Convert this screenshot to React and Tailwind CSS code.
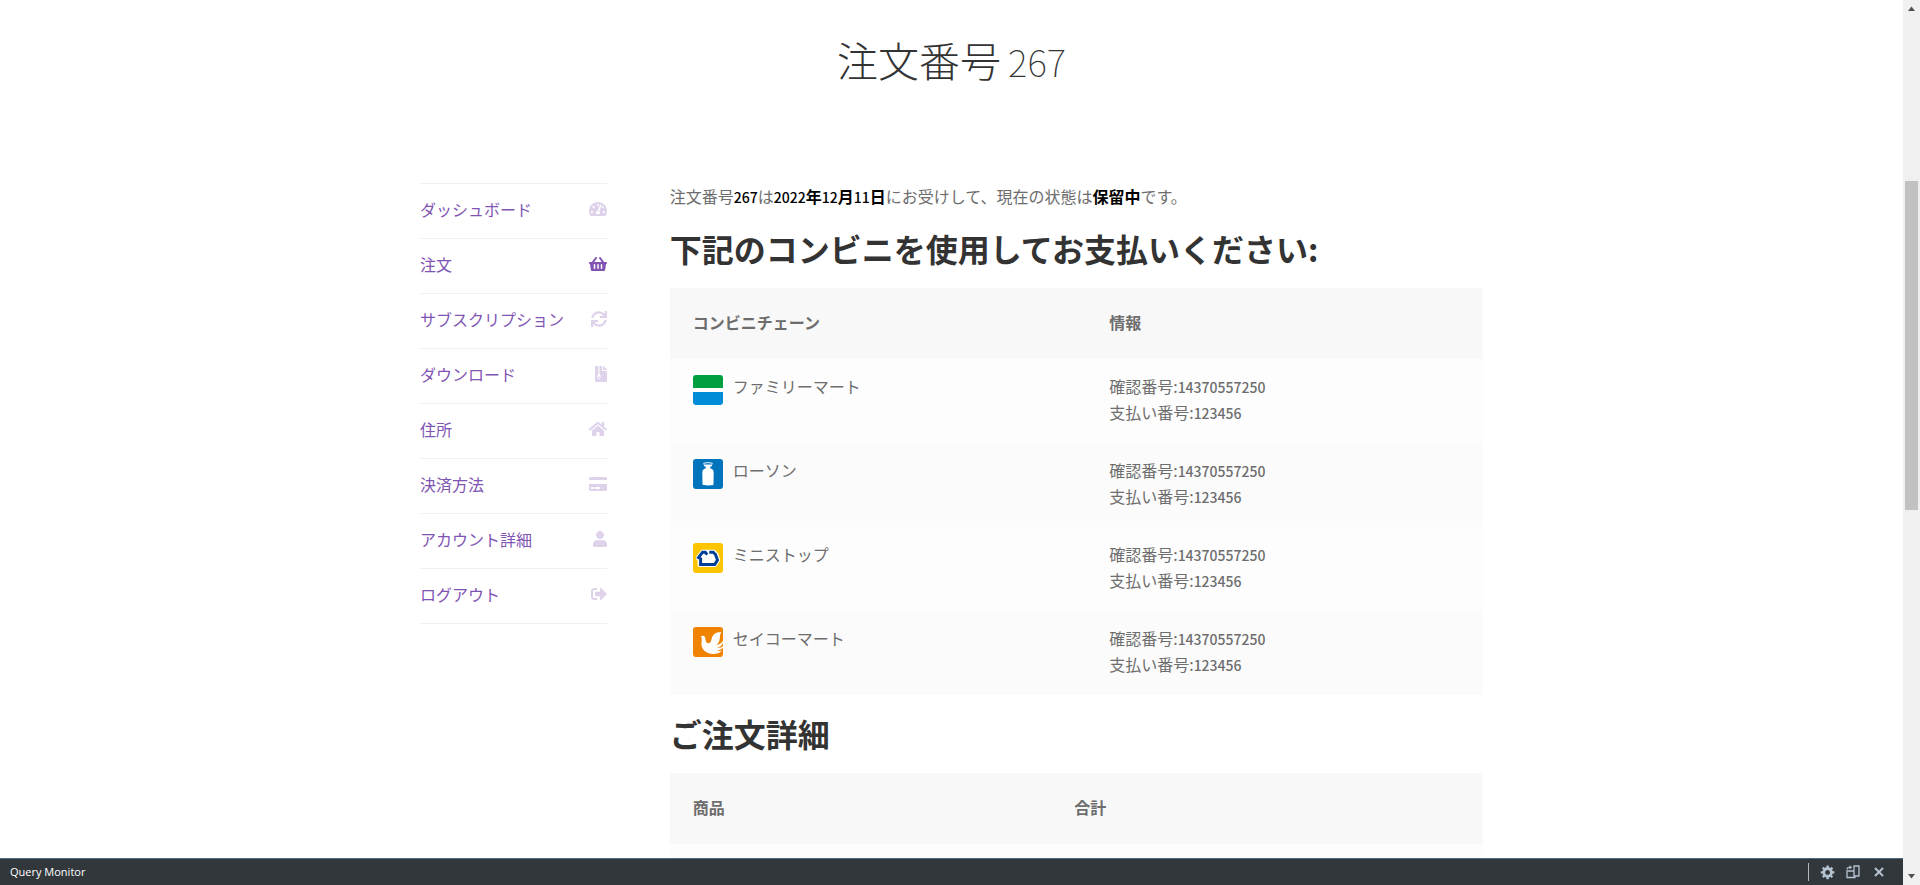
import {
  FaTachometerAlt,
  FaShoppingBasket,
  FaSync,
  FaFileArchive,
  FaHome,
  FaCreditCard,
  FaUser,
  FaSignOutAlt,
} from "react-icons/fa";

const navItems = [
  { label: "ダッシュボード", icon: FaTachometerAlt, width: "w-[18px]" },
  { label: "注文", icon: FaShoppingBasket, width: "w-[18px]", active: true },
  { label: "サブスクリプション", icon: FaSync, width: "w-4" },
  { label: "ダウンロード", icon: FaFileArchive, width: "w-3" },
  { label: "住所", icon: FaHome, width: "w-[18px]" },
  { label: "決済方法", icon: FaCreditCard, width: "w-[18px]" },
  { label: "アカウント詳細", icon: FaUser, width: "w-[14px]" },
  { label: "ログアウト", icon: FaSignOutAlt, width: "w-4" },
];

const FamilyMartLogo = () => (
  <svg viewBox="0 0 30 30" className="w-[30px] h-[30px] rounded-[3px]">
    <rect width="30" height="30" fill="#fff" />
    <rect width="30" height="13" fill="#00a040" />
    <rect y="17" width="30" height="13" fill="#008cd6" />
  </svg>
);

const LawsonLogo = () => (
  <svg viewBox="0 0 30 30" className="w-[30px] h-[30px] rounded-[3px]">
    <rect width="30" height="30" fill="#0073bd" />
    <path
      d="M10.5 4.3Q15 2.8 19.5 4.3M10.8 4.5l1 3M19.2 4.5l-1 3"
      fill="none"
      stroke="#fff"
      strokeWidth="0.9"
    />
    <path
      d="M12.2 5.5h5.6l.3 1.3-.8 1v1.5c2.2.9 3.4 2 3.4 4.2l-.2 12c0 .6-2.5.9-5.5.9s-5.5-.3-5.5-.9l-.2-12c0-2.2 1.2-3.3 3.4-4.2V7.800l-.8-1z"
      fill="#fff"
    />
  </svg>
);

const MiniStopLogo = () => (
  <svg viewBox="0 0 30 30" className="w-[30px] h-[30px] rounded-[3px]">
    <rect width="30" height="30" fill="#fdc500" />
    <path
      d="M7.2 21.500V16L5.500 14.800 9.800 9.300h10.800L23 12l1.500 5-3 4.500z"
      fill="#fff"
      stroke="#fff"
      strokeWidth="5.200"
      strokeLinejoin="round"
    />
    <path
      d="M14.200 11.600L12.200 9.200H9.600L5.500 14.600l2.100 1.200V21.500H21.800L24.500 17 22.500 11.500 20.200 9.200H16.300"
      fill="none"
      stroke="#003f98"
      strokeWidth="3"
    />
  </svg>
);

const SeicomartLogo = () => (
  <svg viewBox="0 0 30 30" className="w-[30px] h-[30px] rounded-[3px]">
    <rect width="30" height="30" fill="#f08300" />
    <path
      d="M7.800 9.200l2.200-.5c1.500 0 2 1 2.200 2.300.4 3 1 5.200 3 5.200 2.300 0 2.800-2 3.500-4.800C19.700 7.800 22.500 5 28.200 5c-.7 1.500-1.200 3-1.300 5-.2 4-1.200 6.500-3.900 8 3-.4 5.500-1.700 7-4.200v1.700c-.3 2.700-2.800 4.500-6 5.200 2.500.2 4.500-.4 6-1.500v1.500c-1.300 1.600-3.300 2.500-6 2.500 1.500.7 3 .9 4.800.6-2.500 2.700-6 3.600-9.800 3.200-6.500-.7-10.800-5-10.600-10.500.1-2.500.8-4.300 0-6.200z"
      fill="#fff"
    />
  </svg>
);

const stores = [
  { name: "ファミリーマート", logo: FamilyMartLogo },
  { name: "ローソン", logo: LawsonLogo },
  { name: "ミニストップ", logo: MiniStopLogo },
  { name: "セイコーマート", logo: SeicomartLogo },
];

const Sidebar = () => (
  <nav className="w-[17.6%]">
    <ul className="border-t border-[#f0f0f0]">
      {navItems.map(({ label, icon: Icon, width, active }) => (
        <li key={label} className="border-b border-[#f0f0f0]">
          <a
            href="#"
            className="flex items-center justify-between pt-3 pb-4 text-[#7f54b3]"
          >
            {label}
            <Icon className={`h-4 ${width} ${active ? "" : "opacity-25"}`} />
          </a>
        </li>
      ))}
    </ul>
  </nav>
);

const SectionTitle = ({ children }) => (
  <h2 className="mt-[19px] mb-[21px] text-[32px] leading-[38px] font-bold text-[#333333]">
    {children}
  </h2>
);

const Digits = ({ children }) => (
  <span className="text-[14px] leading-none font-medium">{children}</span>
);

const Mark = ({ children }) => (
  <mark className="bg-transparent font-bold text-black">{children}</mark>
);

const InfoLine = ({ label, value }) => (
  <div>
    {label}:<Digits>{value}</Digits>
  </div>
);

const StoreTable = () => (
  <table className="w-full table-fixed text-left">
    <thead className="bg-[#f8f8f8]">
      <tr className="h-[71px]">
        <th className="w-[51.2%] px-[23px] pb-1 font-bold">
          コンビニチェーン
        </th>
        <th className="px-[23px] pb-1 font-bold">情報</th>
      </tr>
    </thead>
    <tbody>
      {stores.map(({ name, logo: Logo }) => (
        <tr key={name} className="bg-[#fdfdfd] even:bg-[#fbfbfb] align-top">
          <td className="px-[23px] pt-[14px] pb-[18px]">
            <div className="flex items-start gap-[10px]">
              <div className="pt-0.5">
                <Logo />
              </div>
              <span>{name}</span>
            </div>
          </td>
          <td className="px-[23px] pt-[14px] pb-[18px]">
            <InfoLine label="確認番号" value="14370557250" />
            <InfoLine label="支払い番号" value="123456" />
          </td>
        </tr>
      ))}
    </tbody>
  </table>
);

const OrderTable = () => (
  <table className="w-full table-fixed text-left">
    <thead className="bg-[#f8f8f8]">
      <tr className="h-[71px]">
        <th className="w-[46.9%] px-[23px] pb-1 font-bold">商品</th>
        <th className="px-[23px] pb-1 font-bold">合計</th>
      </tr>
    </thead>
    <tbody>
      <tr className="h-[71px] bg-[#fdfdfd]">
        <td></td>
        <td></td>
      </tr>
    </tbody>
  </table>
);

const QueryMonitorBar = () => (
  <div className="flex h-[27px] shrink-0 items-center justify-between border-t border-[#4f6b80] bg-[#32373c] pl-[10px] pr-4">
    <span className="font-['Open_Sans','Noto_Sans',sans-serif] text-[11px] text-white">
      Query Monitor
    </span>
    <div className="flex items-center text-[#b4c3d0]">
      <span className="mr-[11px] h-[18px] w-px bg-[#b4b9be]"></span>
      <button aria-label="Settings" className="mr-[9px]">
        <svg className="w-4 h-4" fill="currentColor" viewBox="0 0 20 20">
          <path d="M18 12h-2.180c-.17.7-.44 1.350-.81 1.930l1.540 1.540-2.100 2.100-1.540-1.540c-.58.360-1.230.630-1.910.790V19H8v-2.180c-.68-.16-1.330-.43-1.910-.79l-1.540 1.540-2.120-2.120 1.540-1.540c-.36-.58-.63-1.230-.79-1.910H1V9.030h2.170c.16-.7.44-1.350.8-1.940L2.430 5.550l2.100-2.100 1.540 1.540c.58-.37 1.240-.64 1.930-.81V2h3v2.180c.68.160 1.330.430 1.910.790l1.540-1.540 2.120 2.120-1.540 1.540c.36.590.640 1.240.8 1.940H18V12zm-8.500 1.500c1.660 0 3-1.340 3-3s-1.340-3-3-3-3 1.340-3 3 1.340 3 3 3z" />
        </svg>
      </button>
      <button aria-label="Toggle panel position" className="mr-[10px]">
        <svg
          className="w-4 h-4"
          fill="none"
          stroke="currentColor"
          viewBox="0 0 16 16"
        >
          <path strokeWidth="1.3" d="M9 2h5v10H9zM9 7H2v6.500h8V12" />
          <path strokeWidth="1.3" d="M2 5.500C2 4 3 3.300 5 3.300" />
          <path
            d="M4.500 1.200L7.200 3.300 4.500 5.400z"
            fill="currentColor"
            stroke="none"
          />
        </svg>
      </button>
      <button aria-label="Close">
        <svg
          className="w-4 h-4"
          fill="none"
          stroke="currentColor"
          viewBox="0 0 16 16"
        >
          <path strokeWidth="2" d="M4 4l8 8M12 4l-8 8" />
        </svg>
      </button>
    </div>
  </div>
);

const ScrollBar = () => (
  <div className="flex w-[17px] shrink-0 flex-col items-center justify-between bg-[#f0f0f0]">
    <svg className="w-[17px] h-[17px]" viewBox="0 0 17 17">
      <path d="M8.500 6.500L12 11H5z" fill="#505050" />
    </svg>
    <div className="flex w-full flex-1 flex-col items-center">
      <div className="basis-[19.3%]"></div>
      <div className="basis-[38.6%] w-[13px] bg-[#c1c1c1]"></div>
    </div>
    <svg className="w-[17px] h-[17px]" viewBox="0 0 17 17">
      <path d="M8.500 10.500L12 6H5z" fill="#505050" />
    </svg>
  </div>
);

export default function App() {
  return (
    <div className="flex h-screen overflow-hidden bg-white font-['Noto_Sans_CJK_JP',sans-serif] text-base leading-[26px] text-[#6d6d6d]">
      <div className="flex min-w-0 flex-1 flex-col">
        <div className="min-h-0 flex-1 overflow-hidden">
          <div className="mx-auto max-w-[1063px]">
            <h1 className="pt-[34px] pb-[99px] text-center text-[41px] leading-[50px] font-light text-[#333333]">
              注文番号
              <span className="text-[32px] leading-none"> </span>
              <span className="text-[37px] leading-none font-thin">267</span>
            </h1>

            <div className="flex items-start justify-between">
              <Sidebar />
              <main className="w-[76.5%]">
                <p className="pb-px">
                  注文番号
                  <Mark>
                    <Digits>267</Digits>
                  </Mark>
                  は
                  <Mark>
                    <Digits>2022</Digits>年<Digits>12</Digits>月
                    <Digits>11</Digits>日
                  </Mark>
                  にお受けして、現在の状態は
                  <Mark>保留中</Mark>
                  です。
                </p>

                <SectionTitle>
                  下記のコンビニを使用してお支払いください:
                </SectionTitle>
                <StoreTable />

                <SectionTitle>ご注文詳細</SectionTitle>
                <OrderTable />
              </main>
            </div>
          </div>
        </div>
        <QueryMonitorBar />
      </div>
      <ScrollBar />
    </div>
  );
}
